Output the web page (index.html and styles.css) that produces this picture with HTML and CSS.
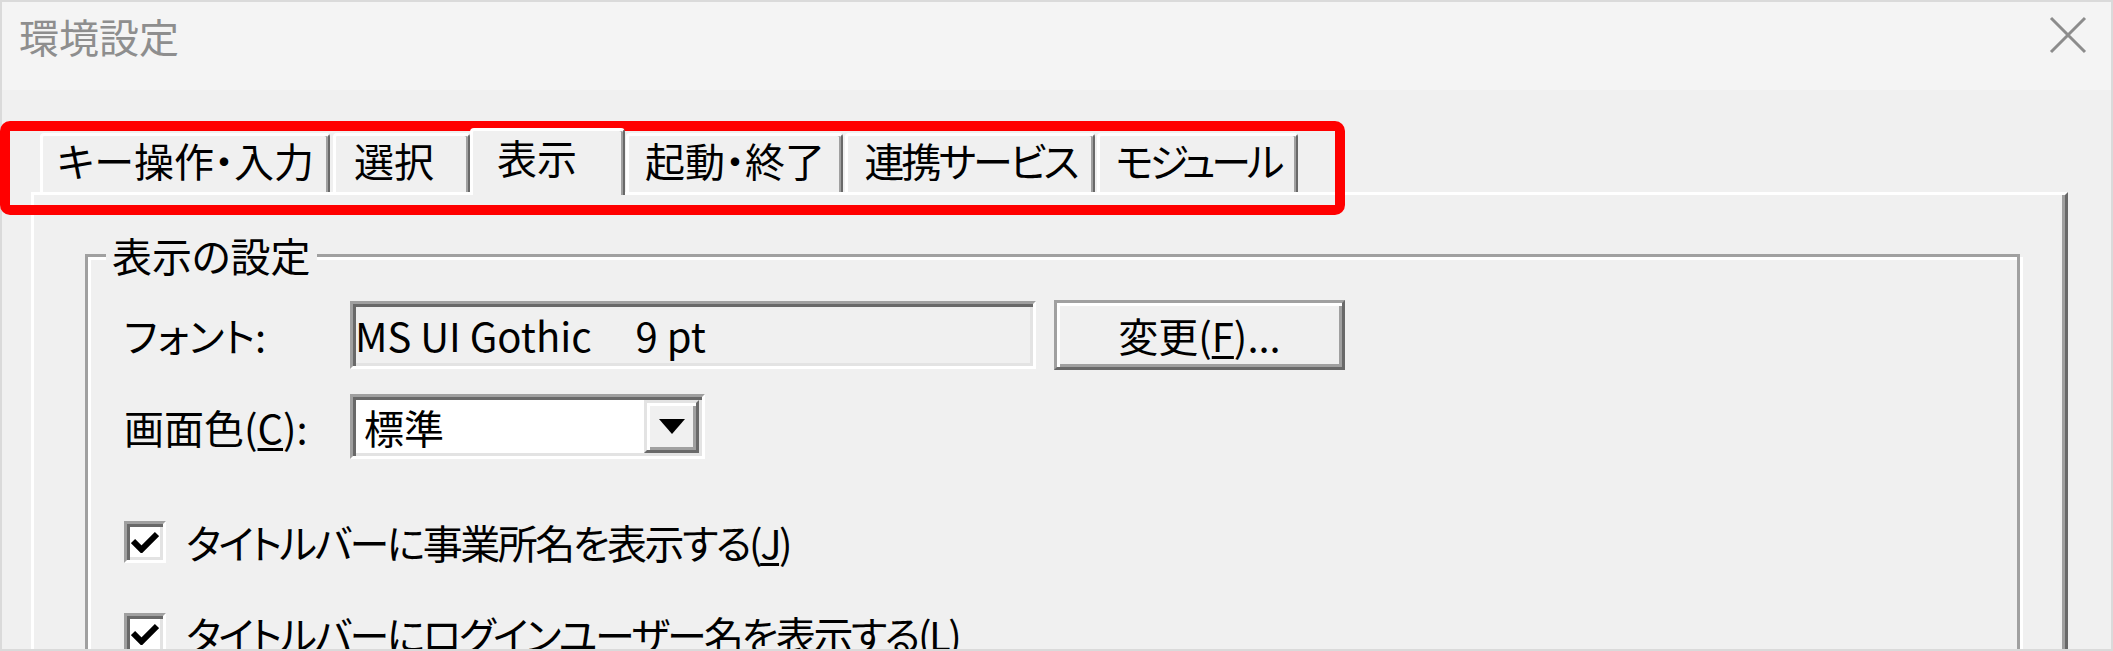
FILE: index.html
```html
<!DOCTYPE html>
<html lang="ja">
<head>
    <meta charset="UTF-8">
    <title>環境設定</title>
    <link rel="stylesheet" href="styles.css">
</head>
<body>
    <div class="dialog">
        <div class="titlebar">
            <span class="title">環境設定</span>
            <svg class="close-btn" width="38" height="38" viewBox="0 0 38 38">
                <path d="M2 2L36 36M36 2L2 36" stroke="#8c8c8c" stroke-width="3" fill="none"/>
            </svg>
        </div>

        <div class="dialog-body">
            <div class="tabs">
                <div class="tab tab-key">キー操作・入力</div>
                <div class="tab tab-select">選択</div>
                <div class="tab tab-view active">表示</div>
                <div class="tab tab-start">起動・終了</div>
                <div class="tab tab-link">連携サービス</div>
                <div class="tab tab-module">モジュール</div>
            </div>

            <div class="tab-panel">
                <fieldset class="group">
                    <legend>表示の設定</legend>

                    <div class="form-row row-font">
                        <span class="field-label">フォント:</span>
                        <div class="text-field">MS UI Gothic<span class="font-size">9 pt</span></div>
                        <button class="btn">変更(<u>F</u>)...</button>
                    </div>

                    <div class="form-row row-color">
                        <span class="field-label">画面色(<u>C</u>):</span>
                        <div class="combo">
                            <span class="combo-value">標準</span>
                            <span class="combo-btn">
                                <svg width="26" height="15" viewBox="0 0 26 15"><path d="M0 0H26L13 15Z" fill="#000"/></svg>
                            </span>
                        </div>
                    </div>

                    <label class="check-row">
                        <span class="checkbox">
                            <svg width="28" height="22" viewBox="0 0 28 22"><path d="M2 10L10.5 18.5L26 3" stroke="#000" stroke-width="6" fill="none"/></svg>
                        </span>
                        タイトルバーに事業所名を表示する(<u>J</u>)
                    </label>

                    <label class="check-row">
                        <span class="checkbox">
                            <svg width="28" height="22" viewBox="0 0 28 22"><path d="M2 10L10.5 18.5L26 3" stroke="#000" stroke-width="6" fill="none"/></svg>
                        </span>
                        タイトルバーにログインユーザー名を表示する(<u>L</u>)
                    </label>
                </fieldset>
            </div>
        </div>
    </div>

    <!-- 注目箇所の赤枠 -->
    <div class="highlight"></div>
</body>
</html>
```

FILE: styles.css
```css
* {
    margin: 0;
    padding: 0;
    box-sizing: border-box;
}

body {
    position: relative;
    width: 2113px;
    height: 651px;
    overflow: hidden;
    background: #f0f0f0;
    font-family: "Noto Sans CJK JP", "Noto Sans CJK SC", sans-serif;
    font-size: 40px;
    line-height: 40px;
    color: #000;
    font-feature-settings: "palt";
}

.dialog {
    height: 651px;
    border: 2px solid #dadada;
    overflow: hidden;
}

/* タイトルバー */
.titlebar {
    height: 88px;
    background: #f4f4f4;
    display: flex;
    justify-content: space-between;
    align-items: flex-start;
    padding: 14px 24px 0 17px;
}

.title {
    color: #8e8e8e;
    font-feature-settings: normal;
}

.close-btn {
    display: block;
}

.dialog-body {
    height: 559px;
    display: flex;
    flex-direction: column;
    padding: 38px 43px 0 29px;
}

/* タブ */
.tabs {
    position: relative;
    z-index: 1;
    display: flex;
    align-items: flex-start;
    height: 64px;
    padding-left: 9px;
}

.tab {
    height: 59px;
    margin-top: 5px;
    margin-right: 3px;
    padding-top: 4px;
    text-align: center;
    white-space: nowrap;
    background: #f0f0f0;
    border-top: 3px solid #fff;
    border-left: 3px solid #fff;
    border-right: 2px solid #696969;
    border-radius: 4px 4px 0 0;
    box-shadow: inset -2px 0 #a0a0a0;
}

.tab-key { width: 290px; }
.tab-select { width: 137px; margin-right: 0; padding-right: 16px; }
.tab-start { width: 217px; margin-right: 2px; }
.tab-link { width: 250px; margin-right: 2px; letter-spacing: -3px; }
.tab-module { width: 201px; letter-spacing: -4px; }

.tab.active {
    width: 155px;
    height: 67px;
    margin-top: 0;
    margin-right: 1px;
    padding-top: 6px;
    padding-right: 22px;
}

.tab-panel {
    flex: 1;
    background: #f0f0f0;
    border-top: 3px solid #fff;
    border-left: 3px solid #fff;
    border-right: 3px solid #696969;
    box-shadow: inset -3px 0 #a0a0a0;
    padding: 40px 45px 0 51px;
}

/* グループ枠 */
.group {
    height: 520px;
    min-width: 0;
    border: 3px solid #a0a0a0;
    box-shadow: inset 3px 3px #fff, 3px 3px #fff;
    padding: 26px 0 0 36px;
}

.group legend {
    margin-left: -18px;
    padding: 0 6px;
    background: #f0f0f0;
}

.form-row {
    display: flex;
    align-items: center;
}

.row-font {
    height: 68px;
}

.row-color {
    height: 65px;
    margin-top: 25px;
}

.field-label {
    width: 226px;
}

u {
    text-decoration-thickness: 3px;
    text-underline-offset: 4px;
}

.text-field {
    width: 686px;
    height: 68px;
    display: flex;
    align-items: center;
    padding-left: 2px;
    white-space: pre;
    font-feature-settings: normal;
    border: 3px solid;
    border-color: #a0a0a0 #fff #fff #a0a0a0;
    box-shadow: inset 3px 3px #696969, inset -3px -3px #e3e3e3;
}

.font-size {
    margin-left: 44px;
}

.btn {
    width: 291px;
    height: 70px;
    margin-left: 18px;
    font: inherit;
    color: #000;
    background: #f0f0f0;
    border: 3px solid;
    border-color: #a0a0a0 #696969 #696969 #a0a0a0;
    box-shadow: inset 3px 3px #fff, inset -3px -3px #a0a0a0;
}

/* コンボボックス */
.combo {
    width: 355px;
    height: 65px;
    display: flex;
    align-items: center;
    justify-content: space-between;
    background: #fff;
    border: 3px solid;
    border-color: #a0a0a0 #fff #fff #a0a0a0;
    box-shadow: inset 3px 3px #696969, inset -3px -3px #e3e3e3;
    padding: 3px 3px 3px 11px;
}

.combo-btn {
    width: 55px;
    height: 100%;
    display: flex;
    align-items: center;
    justify-content: center;
    background: #f0f0f0;
    border: 3px solid;
    border-color: #e3e3e3 #696969 #696969 #e3e3e3;
    box-shadow: inset 3px 3px #fff, inset -3px -3px #a0a0a0;
}

/* チェックボックス */
.check-row {
    display: flex;
    align-items: center;
    height: 42px;
    margin-top: 62px;
    letter-spacing: -2.5px;
}

.check-row + .check-row {
    margin-top: 50px;
}

.checkbox {
    width: 42px;
    height: 42px;
    margin-right: 20px;
    display: flex;
    align-items: center;
    justify-content: center;
    background: #fff;
    border: 3px solid;
    border-color: #a0a0a0 #fff #fff #a0a0a0;
    box-shadow: inset 3px 3px #696969, inset -3px -3px #e3e3e3;
}

.highlight {
    position: absolute;
    left: 0;
    top: 121px;
    width: 1345px;
    height: 94px;
    border: 10px solid #f00;
    border-radius: 10px;
    pointer-events: none;
}
```
